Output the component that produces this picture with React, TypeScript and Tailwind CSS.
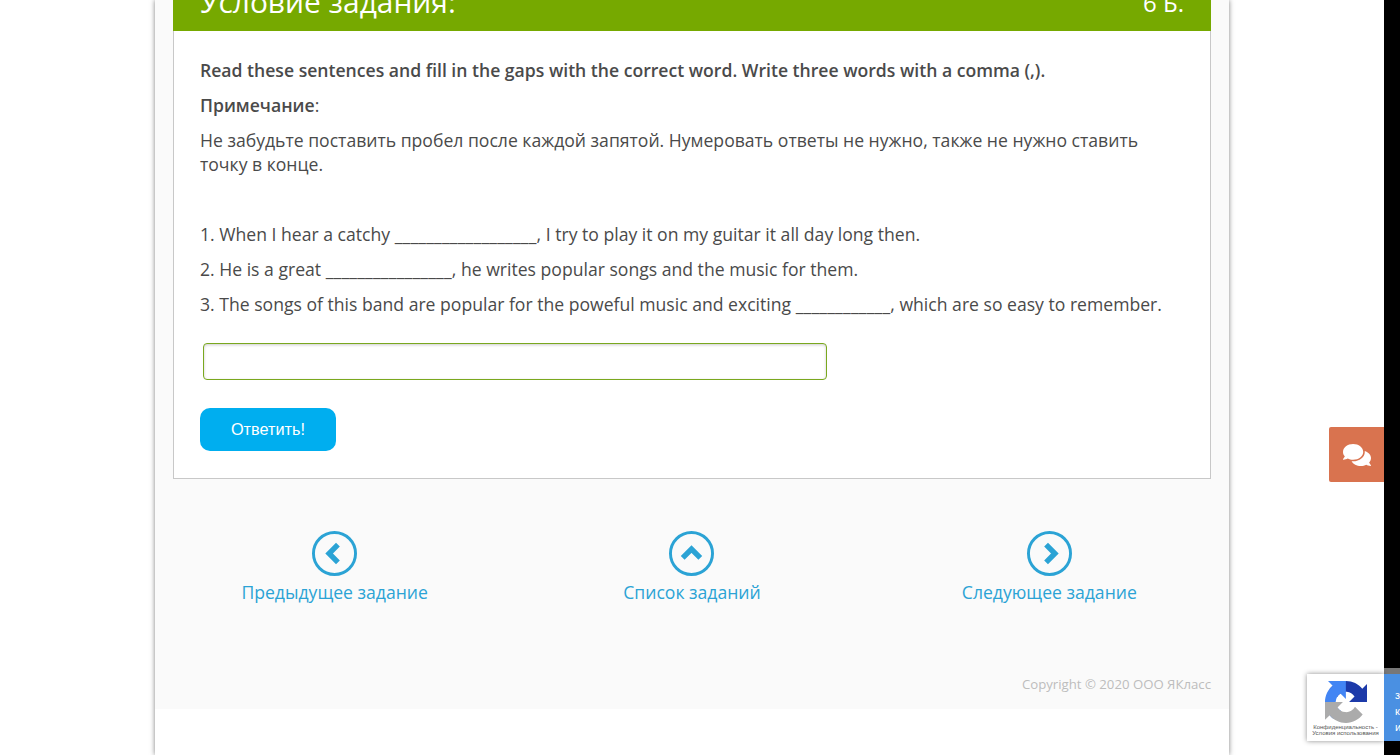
import { FaComments } from "react-icons/fa";

function NavLink({ label, points }: { label: string; points: string }) {
  return (
    <a className="flex flex-col items-center text-[17.6px] leading-6 text-[#2ba3d5]">
      <svg width="45" height="45" viewBox="0 0 46 46" fill="none" className="mb-[4px]">
        <circle cx="23" cy="23" r="21.5" stroke="#2ba3d5" strokeWidth="3" />
        <polyline points={points} stroke="#2ba3d5" strokeWidth="5.5" />
      </svg>
      {label}
    </a>
  );
}

function RecaptchaBadge() {
  return (
    <div className="absolute right-0 top-[674px] w-[93px] h-[67px] flex z-10">
      <div className="w-[77px] bg-white shadow-[0_0_5px_rgba(0,0,0,0.45)] flex flex-col items-center pt-[7px]">
        <svg width="42" height="42" viewBox="0 0 64 64" className="mb-[1px]">
          <path
            fill="#1c3aa9"
            d="M64 31.955l-.033-1.37V4.687l-7.16 7.16C50.948 4.674 42.033.093 32.05.093c-10.4 0-19.622 4.96-25.458 12.64l11.736 11.86a15.55 15.55 0 0 1 4.754-5.334c2.05-1.6 4.952-2.906 8.968-2.906.485 0 .86.057 1.135.163 4.976.393 9.288 3.14 11.828 7.124l-8.307 8.307c10.522-.04 22.4-.066 27.295.005"
          />
          <path
            fill="#4285f4"
            d="M31.862.001l-1.37.033H4.594l7.16 7.16C4.58 13.053 0 21.968 0 31.95c0 10.4 4.96 19.622 12.64 25.458l11.86-11.736a15.55 15.55 0 0 1-5.334-4.754c-1.6-2.05-2.906-4.952-2.906-8.968 0-.485.057-.86.163-1.135.393-4.976 3.14-9.288 7.124-11.828l8.307 8.307c-.04-10.522-.066-22.4.005-27.295"
          />
          <path
            fill="#ababab"
            d="M.001 31.953l.033 1.37v25.898l7.16-7.16c5.858 7.172 14.774 11.753 24.757 11.753 10.4 0 19.622-4.96 25.458-12.64l-11.736-11.86a15.55 15.55 0 0 1-4.754 5.334c-2.05 1.6-4.952 2.906-8.968 2.906-.485 0-.86-.057-1.135-.163-4.976-.393-9.288-3.14-11.828-7.124l8.307-8.307c-10.522.04-22.4.066-27.295-.005"
          />
        </svg>
        <div className="font-['Liberation_Sans',sans-serif] text-[6px] leading-[6px] text-[#555] text-center whitespace-nowrap">
          Конфиденциальность -<br />
          Условия использования
        </div>
      </div>
      <div className="w-4 bg-[#4a90e2] text-white text-[11px] leading-[16px] pl-[11px] pt-[13px] overflow-hidden font-['Liberation_Sans',sans-serif]">
        з<br />к<br />и
      </div>
    </div>
  );
}

function Gap({ text }: { text: string }) {
  return <span className="tracking-[0.18px]">{text}</span>;
}

export default function App() {
  return (
    <div className="relative flex h-[755px] overflow-hidden bg-black font-['Open_Sans',sans-serif] text-[17.6px] leading-6 text-[#4a4a4a]">
      <div className="w-[1384px] bg-white">
        <div className="mx-auto w-[1074px] h-[755px] bg-white shadow-[0_0_5px_rgba(0,0,0,0.5)]">
          <div className="h-[709px] bg-[#fafafa] px-[18px]">
            <div className="flex h-[31px] items-end justify-between overflow-hidden bg-[#76a900] px-[27px] leading-[36px] text-white">
              <span className="mb-[11px] text-[29.9px]">Условие задания:</span>
              <span className="mb-[10px] text-[24px]">6 Б.</span>
            </div>
            <div className="h-[448px] border border-t-0 border-[#c8c8c8] bg-white px-[26px] pt-[27px]">
              <p className="font-semibold">
                Read these sentences and fill in the gaps with the correct word. Write three words with a comma (,).
              </p>
              <p className="mt-[11px]">
                <b className="font-semibold">Примечание</b>:
              </p>
              <p className="mt-[11px] w-[960px]">
                Не забудьте поставить пробел после каждой запятой. Нумеровать ответы не нужно, также не нужно ставить
                точку в конце.
              </p>
              <p className="mt-[46px]">
                1. When I hear a catchy <Gap text="__________________" />, I try to play it on my guitar it all day long then.
              </p>
              <p className="mt-[11px]">
                2. He is a great <Gap text="________________" />, he writes popular songs and the music for them.
              </p>
              <p className="mt-[11px]">
                3. The songs of this band are popular for the poweful music and exciting <Gap text="____________" />, which
                are so easy to remember.
              </p>
              <input
                type="text"
                className="mt-[27px] ml-[3px] block h-[37px] w-[624px] rounded-[4px] border border-[#7aa81e] bg-white shadow-[inset_0_1px_3px_rgba(0,0,0,0.2)]"
              />
              <button className="mt-[28px] block h-[43px] w-[136px] rounded-[10px] bg-[#00aeef] pb-[2px] font-['Liberation_Sans',sans-serif] text-[16.3px] text-white">
                Ответить!
              </button>
            </div>
            <div className="-mx-[17px] mt-[52px] grid grid-cols-3">
              <NavLink label="Предыдущее задание" points="26.5,14 17.5,23 26.5,32" />
              <NavLink label="Список заданий" points="14,27.5 23,18.5 32,27.5" />
              <NavLink label="Следующее задание" points="19.5,14 28.5,23 19.5,32" />
            </div>
            <p className="mt-[71px] text-right text-[13.2px] leading-[18px] text-[#bdbdbd]">Copyright © 2020 ООО ЯКласс</p>
          </div>
        </div>
      </div>
      <div className="absolute left-[1329px] top-[427px] flex h-[55px] w-[55px] items-center justify-center rounded-l-[2px] bg-[#d9734f] text-[28px] text-white">
        <FaComments />
      </div>
      <div className="absolute right-0 top-[668px] h-[6px] w-4 bg-[#777]" />
      <RecaptchaBadge />
    </div>
  );
}
